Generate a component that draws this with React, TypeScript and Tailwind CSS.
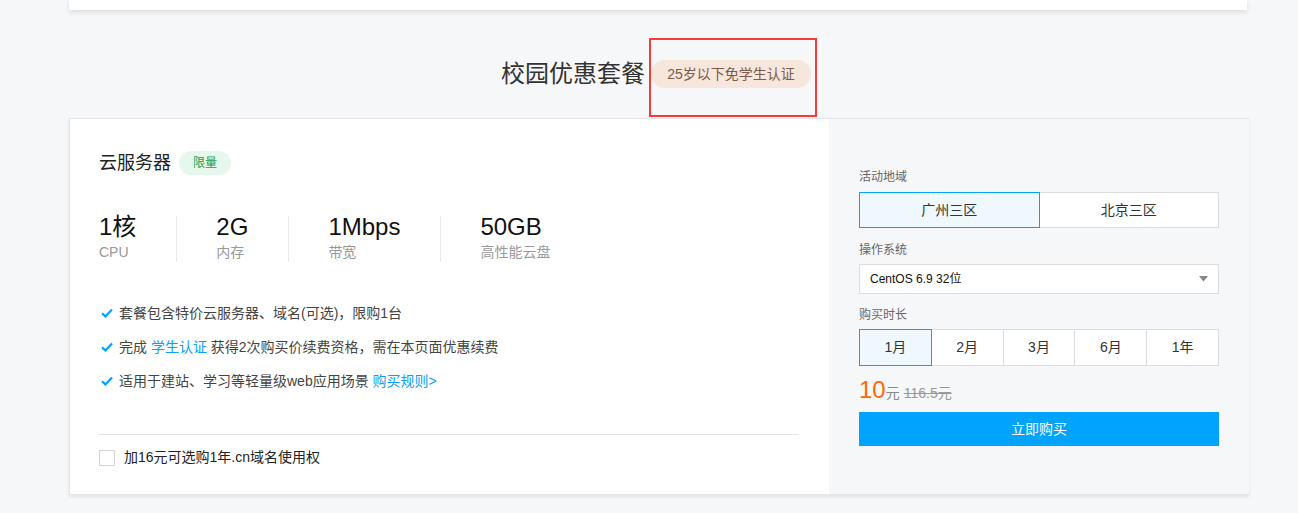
import React, { useState } from 'react';

const FONT = { fontFamily: '"Liberation Sans", Arial, "Noto Sans CJK SC", sans-serif' };

const Check: React.FC = () => (
  <svg width="12" height="10" viewBox="0 0 12 10" className="shrink-0">
    <path d="M1 5.2 L4.4 8.4 L11 1.4" fill="none" stroke="#00a4ff" strokeWidth="2.2" />
  </svg>
);

const App: React.FC = () => {
  const [region, setRegion] = useState(0);
  const [period, setPeriod] = useState(0);
  const regions = ['广州三区', '北京三区'];
  const periods = ['1月', '2月', '3月', '6月', '1年'];
  const stats = [
    { v: '1核', l: 'CPU' },
    { v: '2G', l: '内存' },
    { v: '1Mbps', l: '带宽' },
    { v: '50GB', l: '高性能云盘' },
  ];

  return (
    <div className="w-[1298px] h-[513px] bg-[#f6f7f9] overflow-hidden" style={FONT}>
      {/* top card remnant */}
      <div className="ml-[69px] w-[1178px] h-[10px] bg-white shadow-[0_2px_5px_rgba(0,0,0,0.12)]" />

      {/* heading */}
      <div className="ml-[69px] w-[1180px] h-[108px] flex items-center justify-center pt-[20px]">
        <h2 className="text-[24px] text-[#333] font-normal leading-none">校园优惠套餐</h2>
        <div className="ml-[4px] border-2 border-[#f33c3c] w-[168px] h-[79px] flex items-center justify-center mt-[6px]">
          <span className="h-[28px] px-[16px] rounded-full bg-[#f6e6dc] text-[#7d5a4a] text-[14px] leading-[28px] -ml-[4px] -mt-[6px]">
            25岁以下免学生认证
          </span>
        </div>
      </div>

      {/* main card */}
      <div className="ml-[69px] w-[1180px] h-[377px] flex border border-[#e3e5e8] shadow-[0_2px_4px_rgba(0,0,0,0.08)]">
        {/* left */}
        <div className="w-[759px] bg-white pl-[29px] pr-[30px] pt-[32px] flex flex-col">
          <div className="flex items-center h-[24px]">
            <span className="text-[18px] text-[#222]">云服务器</span>
            <span className="ml-[8px] h-[24px] px-[14px] rounded-full bg-[#e6f8ee] text-[#12a058] text-[12px] leading-[24px]">限量</span>
          </div>

          <div className="flex mt-[41px]">
            {stats.map((s, i) => (
              <div
                key={s.v}
                className={`flex flex-col h-[46px] justify-center ${i === 0 ? 'pr-[40px]' : 'pl-[39px] pr-[40px]'} ${i < stats.length - 1 ? 'border-r border-[#e8e8e8]' : ''}`}
              >
                <span className="text-[24px] text-[#111] leading-[26px] -mt-[4px]">{s.v}</span>
                <span className="text-[14px] text-[#999] leading-[18px] mt-[3px]">{s.l}</span>
              </div>
            ))}
          </div>

          <ul className="mt-[41px] flex flex-col gap-[14px] text-[14px] text-[#444]">
            <li className="flex items-center gap-[6px] h-[20px] pl-[2px]">
              <Check />
              <span>套餐包含特价云服务器、域名(可选)，限购1台</span>
            </li>
            <li className="flex items-center gap-[6px] h-[20px] pl-[2px]">
              <Check />
              <span>
                完成 <a className="text-[#0aa0f5]">学生认证</a> 获得2次购买价续费资格，需在本页面优惠续费
              </span>
            </li>
            <li className="flex items-center gap-[6px] h-[20px] pl-[2px]">
              <Check />
              <span>
                适用于建站、学习等轻量级web应用场景 <a className="text-[#0aa0f5]">购买规则&gt;</a>
              </span>
            </li>
          </ul>

          <div className="mt-[43px] border-t border-[#e2e2e2] w-[700px]" />
          <label className="flex items-center mt-[14px] text-[14px] text-[#222] h-[17px]">
            <span className="w-[16px] h-[16px] border border-[#d5d5d5] bg-white" />
            <span className="ml-[9px]">加16元可选购1年.cn域名使用权</span>
          </label>
        </div>

        {/* right */}
        <div className="flex-1 bg-[#f6f7f9] pl-[30px] pr-[30px] pt-[50px]">
          <div className="text-[12px] text-[#666] leading-[16px]">活动地域</div>
          <div className="flex mt-[7px] w-[360px]">
            {regions.map((r, i) => (
              <button
                key={r}
                onClick={() => setRegion(i)}
                className={`flex-1 h-[36px] text-[14px] text-[#333] ${i > 0 ? '-ml-px' : ''} ${region === i ? 'relative z-10 border border-[#00a4ff] bg-[#f0f8ff]' : 'border border-[#dcdcdc] bg-white'}`}
              >
                {r}
              </button>
            ))}
          </div>

          <div className="text-[12px] text-[#666] leading-[16px] mt-[14px]">操作系统</div>
          <div className="mt-[6px] w-[360px] h-[30px] border border-[#dcdcdc] bg-white flex items-center justify-between pl-[10px] pr-[10px]">
            <span className="text-[12px] text-[#111]">CentOS 6.9 32位</span>
            <svg width="9" height="6" viewBox="0 0 9 6">
              <path d="M0 0 L9 0 L4.5 5.5 Z" fill="#888" />
            </svg>
          </div>

          <div className="text-[12px] text-[#666] leading-[16px] mt-[13px]">购买时长</div>
          <div className="flex mt-[6px] w-[360px]">
            {periods.map((p, i) => (
              <button
                key={p}
                onClick={() => setPeriod(i)}
                className={`flex-1 h-[37px] text-[14px] text-[#333] ${i > 0 ? '-ml-px' : ''} ${period === i ? 'relative z-10 border border-[#1e9bf0] bg-[#f0f8ff]' : 'border border-[#dcdcdc] bg-white'}`}
              >
                {p}
              </button>
            ))}
          </div>

          <div className="flex items-baseline mt-[12px] h-[28px]">
            <span className="text-[24px] text-[#ff6a00] leading-none">10</span>
            <span className="text-[14px] text-[#888]">元</span>
            <span className="ml-[4px] text-[14px] text-[#999] line-through">116.5元</span>
          </div>

          <button className="mt-[6px] w-[360px] h-[34px] bg-[#00a4ff] text-white text-[14px]">立即购买</button>
        </div>
      </div>
    </div>
  );
};

export default App;
